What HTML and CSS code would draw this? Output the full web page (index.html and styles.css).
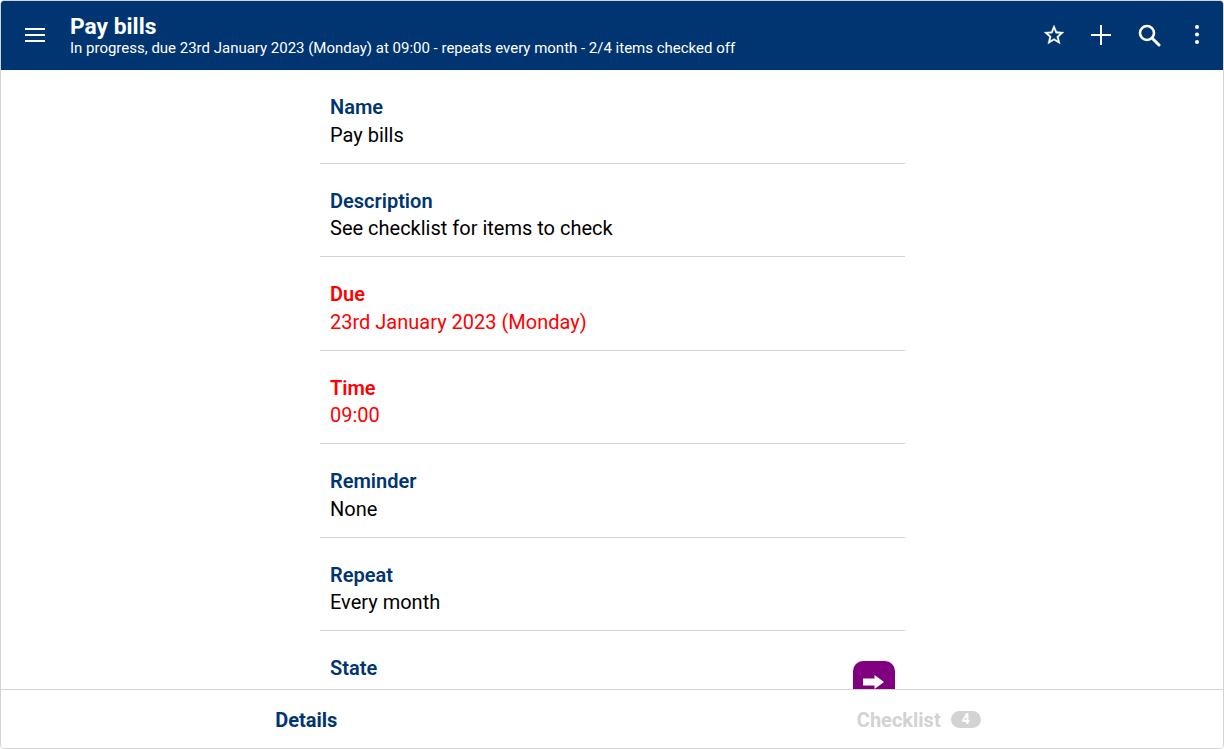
FILE: index.html
```html
<!DOCTYPE html>
<html lang="en">
<head>
<meta charset="utf-8">
<title>Pay bills</title>
<link rel="stylesheet" href="styles.css">
</head>
<body>
<div class="app">
  <header class="topbar">
    <button class="icon-btn menu-btn" aria-label="Menu">
      <svg width="24" height="24" viewBox="0 0 24 24"><path fill="#fff" d="M2 5h20v2H2zM2 11h20v2H2zM2 17h20v2H2z"/></svg>
    </button>
    <div class="titles">
      <div class="title">Pay bills</div>
      <div class="subtitle">In progress, due 23rd January 2023 (Monday) at 09:00 - repeats every month - 2/4 items checked off</div>
    </div>
    <div class="actions">
      <button class="icon-btn" aria-label="Favourite">
        <svg width="24" height="24" viewBox="-1 0 24 24"><path fill="#fff" stroke="#fff" stroke-width=".3" d="M22 9.240l-7.190-.62L12 2 9.190 8.630 2 9.240l5.460 4.730L5.820 21 12 17.270 18.180 21l-1.630-7.030L22 9.240zM12 15.400l-3.760 2.270 1-4.280-3.320-2.880 4.380-.38L12 6.100l1.710 4.040 4.380.38-3.320 2.880 1 4.280L12 15.400z"/></svg>
      </button>
      <button class="icon-btn" aria-label="Add">
        <svg width="24" height="24" viewBox="0 0 24 24"><path fill="#fff" d="M11 2h2v9h9v2h-9v9h-2v-9H2v-2h9z"/></svg>
      </button>
      <button class="icon-btn" aria-label="Search">
        <svg width="24" height="24" viewBox="0 0 24 24"><circle cx="10" cy="10" r="7" fill="none" stroke="#fff" stroke-width="2.600"/><path d="M15 15l7 7" fill="none" stroke="#fff" stroke-width="3" stroke-linecap="round"/></svg>
      </button>
      <button class="icon-btn" aria-label="More">
        <svg width="24" height="24" viewBox="0 0 24 24"><circle fill="#fff" cx="12" cy="4" r="2"/><circle fill="#fff" cx="12" cy="11.500" r="2"/><circle fill="#fff" cx="12" cy="19" r="2"/></svg>
      </button>
    </div>
  </header>
  <main class="content">
    <div class="fields">
      <div class="field"><div class="label">Name</div><div class="value">Pay bills</div></div>
      <div class="field"><div class="label">Description</div><div class="value">See checklist for items to check</div></div>
      <div class="field overdue"><div class="label">Due</div><div class="value">23rd January 2023 (Monday)</div></div>
      <div class="field overdue"><div class="label">Time</div><div class="value">09:00</div></div>
      <div class="field"><div class="label">Reminder</div><div class="value">None</div></div>
      <div class="field"><div class="label">Repeat</div><div class="value">Every month</div></div>
      <div class="field state"><div class="label">State</div>
        <button class="state-btn" aria-label="Change state">
          <svg width="24" height="24" viewBox="-.5 0 24 24"><path fill="#fff" d="M.5 8.500H12V5l9.500 7L12 19v-3.500H.5z"/></svg>
        </button>
      </div>
    </div>
  </main>
  <nav class="tabs">
    <div class="tab active">Details</div>
    <div class="tab inactive">Checklist<span class="badge">4</span></div>
  </nav>
</div>
</body>
</html>
```
FILE: styles.css
```css
* { box-sizing: border-box; }
html, body { margin: 0; height: 100%; overflow: hidden; background: #fff; }
body { font-family: Roboto, "Liberation Sans", sans-serif; }
.app {
  height: 749px;
  display: flex;
  flex-direction: column;
  border: 1px solid #d3d3d3;
  border-radius: 4px;
  overflow: hidden;
}
.topbar {
  flex: none;
  height: 69px;
  padding-bottom: 1px;
  background: #003572;
  color: #fff;
  display: flex;
  align-items: center;
}
.icon-btn {
  width: 48px;
  height: 48px;
  padding: 0;
  border: 0;
  background: none;
  display: flex;
  align-items: center;
  justify-content: center;
}
.menu-btn { margin-left: 10px; margin-right: 11px; }
.titles { flex: 1; min-width: 0; }
.title { font-size: 22.8px; line-height: 26px; font-weight: 700; }
.subtitle { font-size: 14.99px; line-height: 16px; font-weight: 400; }
.actions { display: flex; margin-right: 2px; }
.content { flex: 1; min-height: 0; overflow: hidden; }
.fields { width: 585px; margin-left: 319px; }
.field {
  position: relative;
  height: 93.5px;
  padding: 23px 10px 0;
  border-bottom: 1px solid #d3d3d3;
}
.label { font-size: 20px; line-height: 28px; margin-bottom: -0.2px; font-weight: 600; color: #003572; }
.value { font-size: 20px; line-height: 28px; color: #000; }
.overdue .label, .overdue .value { color: #f00; }
.state { border-bottom: 0; }
.state-btn {
  position: absolute;
  right: 10px;
  top: 30px;
  width: 42px;
  height: 42px;
  padding: 0;
  border: 0;
  border-radius: 10px;
  background: #800080;
  display: flex;
  align-items: center;
  justify-content: center;
}
.tabs {
  flex: none;
  height: 59px;
  padding-top: 1px;
  display: flex;
  background: #fff;
  border-top: 1px solid #d3d3d3;
}
.tab {
  flex: 1;
  display: flex;
  align-items: center;
  justify-content: center;
  font-size: 20px;
  font-weight: 700;
}
.active { color: #003572; padding-left: 1px; }
.inactive { color: #d3d3d3; padding-left: 4px; }
.badge {
  margin-left: 10px;
  width: 30px;
  height: 17px;
  border-radius: 9px;
  background: #d3d3d3;
  color: #fff;
  font-size: 14px;
  line-height: 17px;
  text-align: center;
}
```
